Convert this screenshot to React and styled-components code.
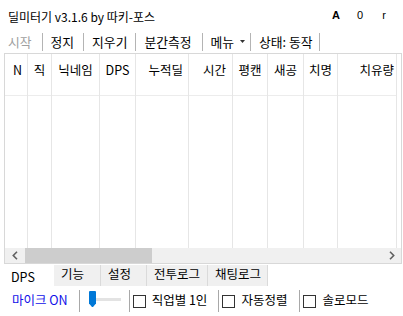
import React from 'react';
import styled, { createGlobalStyle } from 'styled-components';

const Global = createGlobalStyle`
  html, body { margin: 0; padding: 0; background: #fff; }
  body {
    font-family: "Noto Sans CJK KR", "Noto Sans", sans-serif;
    font-size: 12.5px;
    color: #000;
  }
  * { box-sizing: border-box; }
`;

const Window = styled.div`
  width: 403px;
  height: 316px;
  display: flex;
  flex-direction: column;
  background: #fff;
  overflow: hidden;
`;

const TitleBar = styled.div`
  height: 30px;
  display: flex;
  align-items: flex-start;
  padding: 9px 0 0 8px;
`;

const Title = styled.div`
  font-size: 12px;
  line-height: 16px;
  white-space: nowrap;
`;

const Indicators = styled.div`
  margin-left: auto;
  margin-right: 7px;
  display: flex;
`;

const Indicator = styled.span`
  width: 24px;
  text-align: center;
  font-family: "Liberation Sans", Arial, sans-serif;
  font-size: 11px;
  line-height: 13px;
  font-weight: ${p => (p.$bold ? 700 : 400)};
`;

const Toolbar = styled.div`
  height: 23px;
  display: flex;
  align-items: center;
  font-size: 12.8px;
`;

const ToolItem = styled.div`
  display: flex;
  align-items: center;
  padding: 0 ${p => p.$pr ?? 9}px 0 8px;
  line-height: 16px;
  white-space: nowrap;
  color: ${p => (p.$disabled ? '#a0a0a0' : '#000')};
`;

const ToolSep = styled.div`
  width: 1px;
  height: 18px;
  background: #b4b4b4;
`;

const Caret = styled.svg`
  margin-left: 6px;
  width: 5px;
  height: 3px;
`;

const Table = styled.div`
  margin: 0 1px 0 4px;
  height: 211px;
  border: 1px solid #d8d8d8;
  display: flex;
  flex-direction: column;
  background: #fff;
`;

const ColumnsArea = styled.div`
  flex: 1;
  display: flex;
  min-height: 0;
`;

const Column = styled.div`
  width: ${p => p.$w}px;
  flex: none;
  border-right: 1px solid #e6e6e6;
  display: flex;
  flex-direction: column;
`;

const HeaderCell = styled.div`
  height: 42px;
  border-bottom: 1px solid #ececec;
  padding: 8px ${p => p.$pr ?? 3}px 0 ${p => p.$pl ?? 3}px;
  line-height: 16px;
  text-align: ${p => p.$align || 'center'};
  white-space: nowrap;
  overflow: hidden;
`;

const Scrollbar = styled.div`
  height: 15px;
  display: flex;
  background: #f0f0f0;
`;

const ScrollButton = styled.div`
  width: ${p => p.$w}px;
  display: flex;
  align-items: center;
  justify-content: center;
  flex: none;
`;

const ScrollThumb = styled.div`
  width: ${p => p.$w}px;
  background: #cdcdcd;
  flex: none;
`;

const ScrollTrack = styled.div`
  flex: 1;
`;

const TabStrip = styled.div`
  height: 22px;
  display: flex;
  align-items: stretch;
  padding: 1px 0 0 4px;
`;

const Tab = styled.div`
  width: ${p => p.$w}px;
  text-align: left;
  line-height: 16px;
  padding: ${p => (p.$active ? 4 : 1)}px 0 0 7px;
  background: ${p => (p.$active ? '#fff' : '#f0f0f0')};
  border-right: 1px solid ${p => (p.$active ? '#fff' : '#dadada')};
  white-space: nowrap;
`;

const BottomBar = styled.div`
  flex: 1;
  display: flex;
  align-items: center;
  padding: 0 0 3px 12px;
`;

const MicLabel = styled.span`
  color: #1010e8;
  line-height: 16px;
  white-space: nowrap;
`;

const BarSep = styled.div`
  width: 1px;
  height: 22px;
  margin: 3px 0 0 ${p => p.$ml ?? 8}px;
  background: #a8a8a8;
`;

const Slider = styled.svg`
  margin-left: 9px;
  width: 32px;
  height: 17px;
`;

const CheckBox = styled.div`
  width: 13px;
  height: 13px;
  margin: 3px 0 0 3px;
  border: 1px solid #333;
  background: #fff;
  flex: none;
`;

const CheckLabel = styled.span`
  margin-left: 6px;
  line-height: 16px;
  white-space: nowrap;
`;

const Chevron = ({ dir }) => (
  <svg width="6" height="9" viewBox="0 0 6 9">
    <path
      d={dir === 'left' ? 'M5 0.8 L1.3 4.5 L5 8.2' : 'M1 0.8 L4.7 4.5 L1 8.2'}
      fill="none"
      stroke="#606060"
      strokeWidth="1.6"
    />
  </svg>
);

const columns = [
  { label: 'N', w: 23, align: 'left', pl: 8 },
  { label: '직', w: 24 },
  { label: '닉네임', w: 48 },
  { label: 'DPS', w: 36 },
  { label: '누적딜', w: 53, align: 'right', pr: 5 },
  { label: '시간', w: 44, align: 'right', pr: 6 },
  { label: '평캔', w: 35 },
  { label: '새공', w: 36 },
  { label: '치명', w: 34 },
  { label: '치유량', w: 59, align: 'right', pr: 2 },
];

const tabs = [
  { label: 'DPS', w: 50, active: true },
  { label: '기능', w: 47 },
  { label: '설정', w: 46 },
  { label: '전투로그', w: 61 },
  { label: '채팅로그', w: 60 },
];

const checks = [
  { label: '직업별 1인', ml: 8 },
  { label: '자동정렬', ml: 11 },
  { label: '솔로모드', ml: 12 },
];

export default function App() {
  return (
    <>
      <Global />
      <Window>
        <TitleBar>
          <Title>딜미터기 v3.1.6 by 따키-포스</Title>
          <Indicators>
            <Indicator $bold>A</Indicator>
            <Indicator>0</Indicator>
            <Indicator>r</Indicator>
          </Indicators>
        </TitleBar>

        <Toolbar>
          <ToolItem $disabled $pr={10}>시작</ToolItem>
          <ToolSep />
          <ToolItem>정지</ToolItem>
          <ToolSep />
          <ToolItem $pr={8}>지우기</ToolItem>
          <ToolSep />
          <ToolItem $pr={10}>분간측정</ToolItem>
          <ToolSep />
          <ToolItem $pr={5}>
            메뉴
            <Caret viewBox="0 0 5 3">
              <path d="M0 0 H5 L2.5 3 Z" fill="#333" />
            </Caret>
          </ToolItem>
          <ToolSep />
          <ToolItem $pr={6}>상태: 동작</ToolItem>
          <ToolSep />
        </Toolbar>

        <Table>
          <ColumnsArea>
            {columns.map(c => (
              <Column key={c.label} $w={c.w}>
                <HeaderCell $align={c.align} $pl={c.pl} $pr={c.pr}>
                  {c.label}
                </HeaderCell>
              </Column>
            ))}
          </ColumnsArea>
          <Scrollbar>
            <ScrollButton $w={20}>
              <Chevron dir="left" />
            </ScrollButton>
            <ScrollThumb $w={127} />
            <ScrollTrack />
            <ScrollButton $w={19}>
              <Chevron dir="right" />
            </ScrollButton>
          </Scrollbar>
        </Table>

        <TabStrip>
          {tabs.map(t => (
            <Tab key={t.label} $w={t.w} $active={t.active}>
              {t.label}
            </Tab>
          ))}
        </TabStrip>

        <BottomBar>
          <MicLabel>마이크 ON</MicLabel>
          <BarSep $ml={11} />
          <Slider viewBox="0 0 32 17">
            <rect x="6" y="7" width="26" height="3" fill="#e3e3e3" />
            <path
              d="M1 0 H6 Q7 0 7 1 V12.5 L4 16 H3 L0 12.5 V1 Q0 0 1 0 Z"
              fill="#0078d7"
            />
          </Slider>
          {checks.map(c => (
            <React.Fragment key={c.label}>
              <BarSep $ml={c.ml} />
              <CheckBox />
              <CheckLabel>{c.label}</CheckLabel>
            </React.Fragment>
          ))}
        </BottomBar>
      </Window>
    </>
  );
}
